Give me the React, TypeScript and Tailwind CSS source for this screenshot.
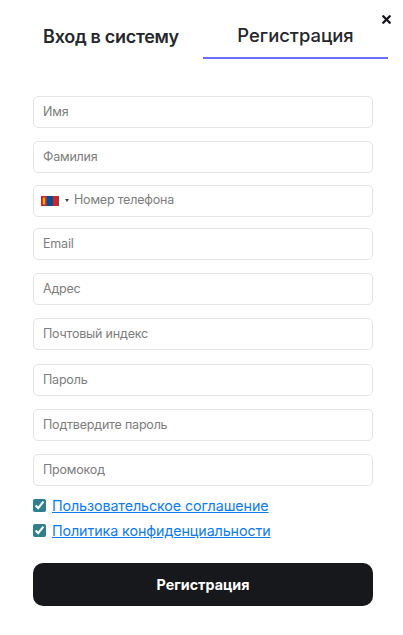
import { X } from 'lucide-react'

const fieldsAfter = ['Адрес', 'Почтовый индекс', 'Пароль', 'Подтвердите пароль', 'Промокод']

function Field({ placeholder, className }: { placeholder: string; className: string }) {
  return (
    <input
      placeholder={placeholder}
      className={`h-[32px] w-full rounded-[5px] border border-[#e4e4e4] bg-white px-[9px] pb-[1px] text-[12.5px] tracking-[-0.2px] outline-none placeholder:text-[#7d7d7d] ${className}`}
    />
  )
}

function Flag() {
  return (
    <svg width="18" height="10" viewBox="0 0 18 10">
      <rect width="18" height="10" fill="#c4272f" />
      <rect x="6" width="6" height="10" fill="#015197" />
      <rect x="1.8" y="1.5" width="2.4" height="7" fill="#f9a602" />
    </svg>
  )
}

export default function App() {
  return (
    <div className="relative h-[635px] w-[403px] overflow-hidden bg-white font-['Inter','Noto_Sans',sans-serif]">
      <X className="absolute right-[10px] top-[13px] h-[13px] w-[13px] text-[#17181c]" strokeWidth={4.5} />

      <div className="mx-[15px] flex pt-[14px]">
        <div className="flex h-[45px] w-[188px] items-center justify-center pl-[4px] text-[18px] font-semibold tracking-[-0.3px] text-[#25272c]">
          Вход в систему
        </div>
        <div className="flex h-[45px] w-[185px] items-center justify-center border-b-2 border-[#6a6ffb] text-[18.4px] font-medium text-[#25272c]">
          Регистрация
        </div>
      </div>

      <form className="ml-[33px] mr-[30px] mt-[37px] flex flex-col">
        <Field placeholder="Имя" className="mb-[13px]" />
        <Field placeholder="Фамилия" className="mb-[12px]" />
        <div className="mb-[11px] flex h-[32px] w-full items-center rounded-[5px] border border-[#e4e4e4] bg-white pb-[1px] pl-[7px]">
          <Flag />
          <span className="ml-[6px] h-0 w-0 border-x-[2.5px] border-t-[3px] border-x-transparent border-t-[#444]" />
          <span className="ml-[5px] text-[12.5px] tracking-[-0.2px] text-[#7d7d7d]">Номер телефона</span>
        </div>
        <Field placeholder="Email" className="mb-[13px]" />
        {fieldsAfter.map((f) => (
          <Field key={f} placeholder={f} className="mb-[13.25px]" />
        ))}

        <label className="-mt-[4px] flex h-[20px] items-center">
          <input type="checkbox" defaultChecked className="h-[13px] w-[13px] accent-[#2f7f8f]" />
          <a href="#" className="ml-[6px] text-[14.3px] tracking-[-0.1px] text-[#0d7bf5] underline">
            Пользовательское соглашение
          </a>
        </label>
        <label className="mt-[5px] flex h-[20px] items-center">
          <input type="checkbox" defaultChecked className="h-[13px] w-[13px] accent-[#2f7f8f]" />
          <a href="#" className="ml-[6px] text-[14.3px] tracking-[-0.1px] text-[#0d7bf5] underline">
            Политика конфиденциальности
          </a>
        </label>

        <button type="button" className="mt-[23px] h-[43px] w-full rounded-[10px] bg-[#17181c] text-[14.3px] font-bold text-white">
          Регистрация
        </button>
      </form>
    </div>
  )
}
